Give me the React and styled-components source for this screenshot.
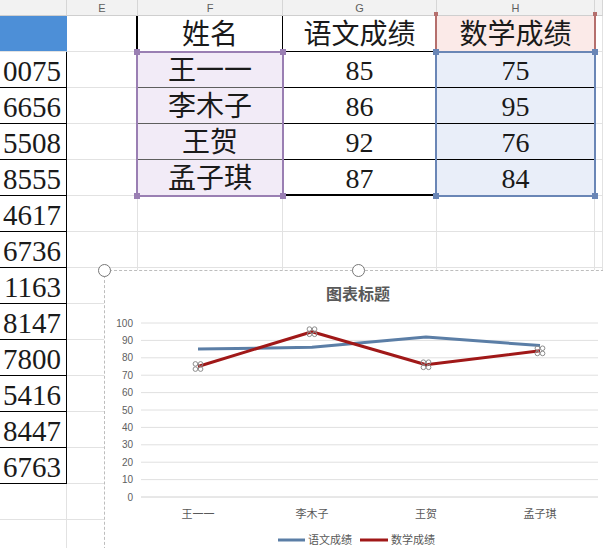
import React from 'react';
import styled, { createGlobalStyle } from 'styled-components';

const GlobalStyle = createGlobalStyle`
    html, body {
        margin: 0;
        padding: 0;
        background: #ffffff;
        overflow: hidden;
    }
`;

const SERIF = `"Liberation Serif", "Noto Sans CJK SC", serif`;
const SANS = `"Liberation Sans", "Noto Sans CJK SC", sans-serif`;

export const Page = styled.div`
    position: relative;
    width: 603px;
    height: 548px;
    overflow: hidden;
`;

export const Sheet = styled.div`
    display: grid;
    grid-template-columns: 67px 71px 145px 154px 158px 1fr;
    grid-template-rows: 16px repeat(15, 36px);
`;

export const ColHead = styled.div`
    grid-row: 1;
    grid-column: ${p => p.$c};
    box-sizing: border-box;
    background: #f2f2f2;
    border-right: 1px solid #d6d6d6;
    border-bottom: 1px solid #cfcfcf;
    display: flex;
    align-items: center;
    justify-content: center;
    font-family: ${SANS};
    font-size: 11px;
    color: #5e5e5e;
`;

export const Cell = styled.div`
    grid-row: ${p => p.$r};
    grid-column: ${p => p.$c};
    box-sizing: border-box;
    background: ${p => p.$fill || '#ffffff'};
    border-right: ${p => p.$rw || 1}px solid ${p => p.$rc || '#e2e2e2'};
    border-bottom: ${p => p.$bw || 1}px solid ${p => p.$bc || '#e2e2e2'};
    display: flex;
    align-items: center;
    justify-content: ${p => (p.$num ? 'flex-end' : 'center')};
    padding: 3px ${p => (p.$num ? '5px' : '0')} 0 0;
    white-space: nowrap;
    font-family: ${SERIF};
    font-size: ${p => (p.$num ? 29 : 28)}px;
    color: #1a1a1a;
    line-height: 1;
`;

export const Selection = styled.div`
    position: relative;
    box-sizing: border-box;
    grid-column: ${p => p.$col};
    grid-row: ${p => p.$row};
    margin: -1px -1px -1px -2px;
    border-left: 2px solid ${p => p.$color};
    border-right: 2px solid ${p => p.$color};
    border-top: ${p => (p.$open ? 'none' : `2px solid ${p.$color}`)};
    border-bottom: ${p => (p.$open ? 'none' : `2px solid ${p.$color}`)};
    pointer-events: none;
`;

export const Handle = styled.span`
    position: absolute;
    width: ${p => p.$size || 6}px;
    height: ${p => p.$size || 6}px;
    background: ${p => p.$color};
    ${p => (p.$top ? 'top' : 'bottom')}: -${p => ((p.$size || 6) + 2) / 2}px;
    ${p => (p.$left ? 'left' : 'right')}: -${p => ((p.$size || 6) + 2) / 2}px;
`;

export const ChartFrame = styled.div`
    position: absolute;
    left: 104px;
    top: 270px;
    width: 520px;
    height: 290px;
    box-sizing: border-box;
    background: #ffffff;
    border-top: 1px dashed #bdbdbd;
    border-left: 1px dashed #bdbdbd;
`;

export const RoundHandle = styled.span`
    position: absolute;
    top: -7px;
    left: ${p => p.$x - 7}px;
    width: 11px;
    height: 11px;
    border-radius: 50%;
    border: 1.5px solid #777777;
    background: #ffffff;
    z-index: 2;
`;

export const ChartSvg = styled.svg`
    display: block;
    position: absolute;
    left: -1px;
    top: -1px;
    font-family: ${SANS};
`;

const columns = ['', 'E', 'F', 'G', 'H', ''];
const leftNumbers = ['0075', '6656', '5508', '8555', '4617', '6736', '1163', '8147', '7800', '5416', '8447', '6763'];
const students = [
    { name: '王一一', chinese: 85, math: 75 },
    { name: '李木子', chinese: 86, math: 95 },
    { name: '王贺', chinese: 92, math: 76 },
    { name: '孟子琪', chinese: 87, math: 84 },
];

const PURPLE = '#9a7fb3';
const BLUE = '#6a86b6';
const ROSE = '#b56f6d';

const buildRow = (r) => {
    // r is the sheet row number (1..15), grid row is r + 1
    const g = r + 1;
    const cells = [];
    // column D
    if (r === 1) cells.push(<Cell key={`d${r}`} $r={g} $c={1} $fill="#4d8fd7" $rc="#4d8fd7" />);
    else if (r <= 13) cells.push(<Cell key={`d${r}`} $r={g} $c={1} $num $rc="#000" $bc="#000">{leftNumbers[r - 2]}</Cell>);
    else cells.push(<Cell key={`d${r}`} $r={g} $c={1} />);

    // column E
    cells.push(<Cell key={`e${r}`} $r={g} $c={2} $rc={r === 1 ? '#000' : undefined} $rw={r === 1 ? 2 : 1} />);

    // columns F, G, H
    if (r === 1) {
        cells.push(<Cell key={`f${r}`} $r={g} $c={3} $rc="#000" $bc="#000">姓名</Cell>);
        cells.push(<Cell key={`g${r}`} $r={g} $c={4} $bc="#000">语文成绩</Cell>);
        cells.push(<Cell key={`h${r}`} $r={g} $c={5} $fill="#fbeae8">数学成绩</Cell>);
    } else if (r <= 5) {
        const s = students[r - 2];
        const last = r === 5;
        cells.push(<Cell key={`f${r}`} $r={g} $c={3} $fill="#f2ebf7" $bc={last ? '#000' : '#5e5e5e'}>{s.name}</Cell>);
        cells.push(<Cell key={`g${r}`} $r={g} $c={4} $bc="#000" $bw={last ? 2 : 1}>{s.chinese}</Cell>);
        cells.push(<Cell key={`h${r}`} $r={g} $c={5} $fill="#e9eef9" $bc="#000">{s.math}</Cell>);
    } else {
        cells.push(
            <Cell key={`f${r}`} $r={g} $c={3} />,
            <Cell key={`g${r}`} $r={g} $c={4} />,
            <Cell key={`h${r}`} $r={g} $c={5} />
        );
    }
    cells.push(<Cell key={`i${r}`} $r={g} $c={6} />);
    return cells;
};

const yOf = (v) => 497 - v * 1.74;
const xs = [198, 312, 426, 540];
const ticks = [0, 10, 20, 30, 40, 50, 60, 70, 80, 90, 100];
const CJK = `"Noto Sans CJK SC", sans-serif`;

const Marker = ({ x, y }) => (
    <g fill="none" stroke="#8c8c8c" strokeWidth="1">
        <circle cx={x - 2.6} cy={y - 2.6} r="2.3" />
        <circle cx={x + 2.6} cy={y - 2.6} r="2.3" />
        <circle cx={x - 2.6} cy={y + 2.6} r="2.3" />
        <circle cx={x + 2.6} cy={y + 2.6} r="2.3" />
    </g>
);

const LineChart = () => {
    const chinesePts = students.map((s, i) => `${xs[i]},${yOf(s.chinese)}`).join(' ');
    const mathPts = students.map((s, i) => `${xs[i]},${yOf(s.math)}`).join(' ');
    return (
        <ChartSvg width="520" height="290" viewBox="104 270 520 290">
            <text x="358" y="300" textAnchor="middle" fontSize="16" fontWeight="700" fill="#595959"
                fontFamily={CJK}>图表标题</text>
            {ticks.map((t) => (
                <g key={t}>
                    <line x1="141" x2="598" y1={yOf(t)} y2={yOf(t)} stroke={t === 0 ? '#d0d0d0' : '#e0e0e0'} strokeWidth="1" />
                    <text x="133" y={yOf(t) + 3.5} textAnchor="end" fontSize="10" fill="#606060">{t}</text>
                </g>
            ))}
            {students.map((s, i) => (
                <text key={s.name} x={xs[i]} y="518" textAnchor="middle" fontSize="11" fill="#595959"
                    fontFamily={CJK}>{s.name}</text>
            ))}
            <polyline points={chinesePts} fill="none" stroke="#5b7ea6" strokeWidth="3" strokeLinejoin="round" />
            <polyline points={mathPts} fill="none" stroke="#a01818" strokeWidth="3" strokeLinejoin="round" />
            {students.map((s, i) => (
                <Marker key={s.name} x={xs[i]} y={yOf(s.math)} />
            ))}
            <line x1="278" x2="305" y1="540" y2="540" stroke="#5b7ea6" strokeWidth="3" />
            <text x="308" y="544" fontSize="11" fill="#595959" fontFamily={CJK}>语文成绩</text>
            <line x1="360" x2="388" y1="540" y2="540" stroke="#a01818" strokeWidth="3" />
            <text x="391" y="544" fontSize="11" fill="#595959" fontFamily={CJK}>数学成绩</text>
        </ChartSvg>
    );
};

const App = () => {
    const rows = Array.from({ length: 15 }, (_, i) => i + 1);
    return (
        <Page>
            <GlobalStyle />
            <Sheet>
                {columns.map((c, i) => <ColHead key={`h${i}`} $c={i + 1}>{c}</ColHead>)}
                {rows.map((r) => buildRow(r))}

                <Selection $col="5" $row="2 / 3" $color={ROSE} $open>
                    <Handle $color={ROSE} $size={4} $top $left />
                    <Handle $color={ROSE} $size={4} $top />
                </Selection>
                <Selection $col="3" $row="3 / 7" $color={PURPLE}>
                    <Handle $color={PURPLE} $top $left />
                    <Handle $color={PURPLE} $top />
                    <Handle $color={PURPLE} $left />
                    <Handle $color={PURPLE} />
                </Selection>
                <Selection $col="5" $row="3 / 7" $color={BLUE}>
                    <Handle $color={BLUE} $top $left />
                    <Handle $color={BLUE} $top />
                    <Handle $color={BLUE} $left />
                    <Handle $color={BLUE} />
                </Selection>
            </Sheet>

            <ChartFrame>
                <RoundHandle $x={0} />
                <RoundHandle $x={254} />
                <LineChart />
            </ChartFrame>
        </Page>
    );
};

export default App;
